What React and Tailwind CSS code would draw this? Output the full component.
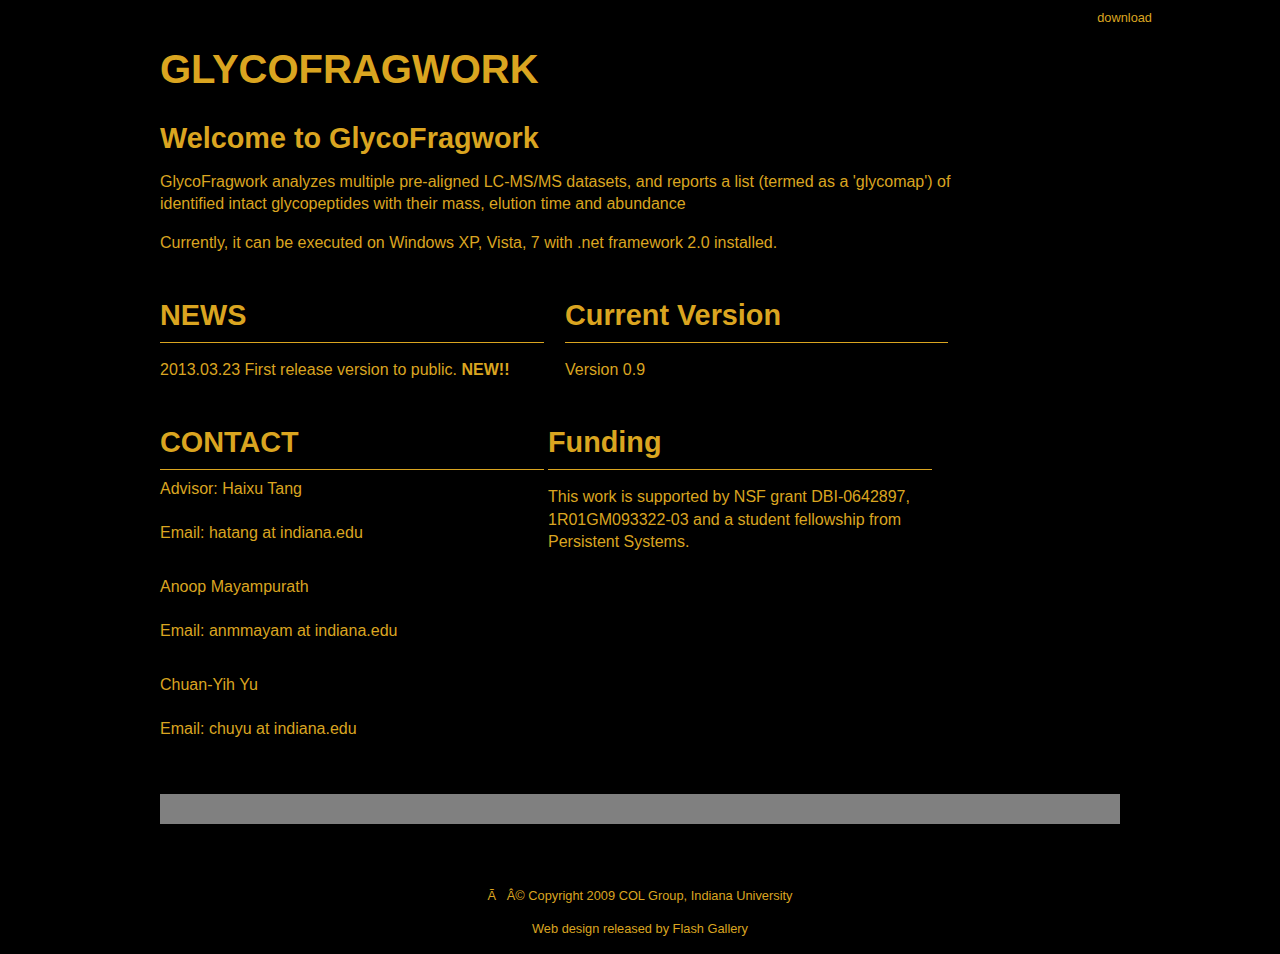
const gold = "text-[#daa520]";

const SectionHead = ({ children }) => (
  <h2 className="text-[28.8px] leading-[33px] font-bold pb-[10px] border-b border-[#daa520]">
    {children}
  </h2>
);

const Line = ({ children, className = "" }) => (
  <p className={"text-[16px] leading-[22px] " + className}>{children}</p>
);

export default function App() {
  return (
    <div
      className={"min-h-[954px] bg-black " + gold}
      style={{ fontFamily: '"Liberation Sans", Arial, sans-serif' }}
    >
      <div className="mx-auto w-[1024px] flex justify-end pt-[10px]">
        <a className="text-[12.8px] leading-[16px]">download</a>
      </div>

      <div className="mx-auto w-[960px]">
        <h1 className="mt-[20px] text-[40px] leading-[46px] font-bold">
          GLYCOFRAGWORK
        </h1>
        <h2 className="mt-[30px] text-[28.8px] leading-[33px] font-bold">
          Welcome to GlycoFragwork
        </h2>
        <div className="w-[800px] mt-[16px]">
          <Line>
            GlycoFragwork analyzes multiple pre-aligned LC-MS/MS datasets, and
            reports a list (termed as a 'glycomap') of identified intact
            glycopeptides with their mass, elution time and abundance
          </Line>
          <Line className="mt-[17px]">
            Currently, it can be executed on Windows XP, Vista, 7 with .net
            framework 2.0 installed.
          </Line>
        </div>

        <div className="flex gap-[21px] mt-[45px]">
          <div className="w-[384px]">
            <SectionHead>NEWS</SectionHead>
            <Line className="mt-[16px]">
              2013.03.23 First release version to public. <b>NEW!!</b>
            </Line>
          </div>
          <div className="w-[383px]">
            <SectionHead>Current Version</SectionHead>
            <Line className="mt-[16px]">Version 0.9</Line>
          </div>
        </div>

        <div className="flex gap-[4px] mt-[45px]">
          <div className="w-[384px]">
            <SectionHead>CONTACT</SectionHead>
            <div className="mt-[8px]">
              <Line>Advisor: Haixu Tang</Line>
              <Line className="mt-[22px]">Email: hatang at indiana.edu</Line>
              <Line className="mt-[32px]">Anoop Mayampurath</Line>
              <Line className="mt-[22px]">Email: anmmayam at indiana.edu</Line>
              <Line className="mt-[32px]">Chuan-Yih Yu</Line>
              <Line className="mt-[22px]">Email: chuyu at indiana.edu</Line>
            </div>
          </div>
          <div className="w-[384px]">
            <SectionHead>Funding</SectionHead>
            <p className="mt-[16px] text-[16px] leading-[22.5px]">
              This work is supported by NSF grant DBI-0642897, 1R01GM093322-03
              and a student fellowship from Persistent Systems.
            </p>
          </div>
        </div>

        <div className="mt-[54px] h-[30px] bg-[#808080]" />

        <div className="mt-[64px] text-center text-[12.8px] leading-[16px] pb-[16px]">
          <p>Ã{"\u00a0\u00a0\u00a0"}Â© Copyright 2009 COL Group, Indiana University</p>
          <p className="mt-[17px]">Web design released by Flash Gallery</p>
        </div>
      </div>
    </div>
  );
}
